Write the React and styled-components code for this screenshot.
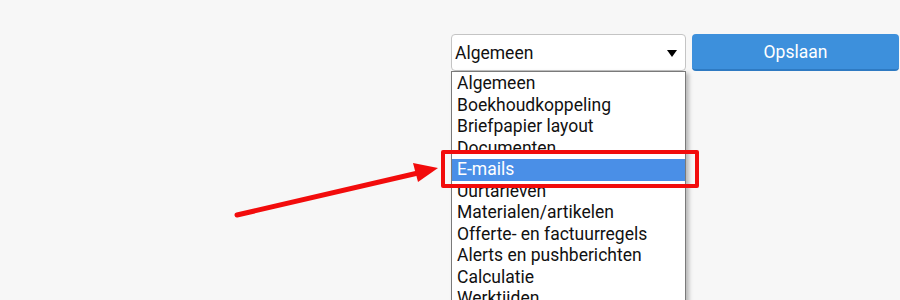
import React from 'react';
import styled, { createGlobalStyle } from 'styled-components';

const GlobalStyle = createGlobalStyle`
  html, body {
    margin: 0;
    padding: 0;
    background: #f7f7f7;
    font-family: Roboto, "Liberation Sans", Arial, sans-serif;
    overflow: hidden;
  }
`;

const Page = styled.div`
  position: relative;
  width: 900px;
  height: 300px;
  overflow: hidden;
`;

const Toolbar = styled.div`
  display: flex;
  justify-content: flex-end;
  align-items: flex-start;
  gap: 6px;
  padding: 34px 1px 0 0;
`;

const SelectWrap = styled.div`
  position: relative;
  width: 235px;
`;

const SelectBox = styled.div`
  box-sizing: border-box;
  height: 37px;
  display: flex;
  align-items: center;
  justify-content: space-between;
  padding: 1px 4px 0 3px;
  background: #fff;
  border: 1px solid #c4c4c4;
  border-radius: 4px;
  font-size: 17.5px;
  color: #111;
`;

const Caret = styled.span`
  width: 0;
  height: 0;
  margin-right: 4px;
  border-left: 5px solid transparent;
  border-right: 5px solid transparent;
  border-top: 7px solid #000;
`;

const List = styled.ul`
  position: absolute;
  top: 37px;
  left: 0;
  width: 235px;
  box-sizing: border-box;
  margin: 0;
  padding: 1px 0;
  list-style: none;
  background: #fff;
  border: 1px solid #7a7a7a;
  box-shadow: 3px 2px 4px rgba(0, 0, 0, 0.25);
  z-index: 2;
`;

const Option = styled.li`
  height: 21.5px;
  line-height: 21.5px;
  padding-left: 5px;
  font-size: 17.5px;
  white-space: nowrap;
  color: ${(p) => (p.active ? '#fff' : '#111')};
  background: ${(p) => (p.active ? '#4a8fe7' : 'transparent')};
`;

const SaveButton = styled.button`
  width: 207px;
  height: 37px;
  border: none;
  border-bottom: 2px solid #2e7ac2;
  border-radius: 4px;
  background: #3d90dc;
  color: #fff;
  font-family: inherit;
  font-size: 17.5px;
  padding: 0;
  cursor: pointer;
`;

const Highlight = styled.div`
  position: absolute;
  left: 441px;
  top: 150px;
  width: 258px;
  height: 38px;
  box-sizing: border-box;
  border: 4px solid #f20c0c;
  border-radius: 2px;
  z-index: 3;
`;

const Arrow = styled.svg`
  position: absolute;
  left: 0;
  top: 0;
  z-index: 3;
  pointer-events: none;
`;

const options = [
  'Algemeen',
  'Boekhoudkoppeling',
  'Briefpapier layout',
  'Documenten',
  'E-mails',
  'Uurtarieven',
  'Materialen/artikelen',
  'Offerte- en factuurregels',
  'Alerts en pushberichten',
  'Calculatie',
  'Werktijden',
  'Gebruikers',
];

export default function App() {
  return (
    <Page>
      <GlobalStyle />
      <Toolbar>
        <SelectWrap>
          <SelectBox>
            Algemeen
            <Caret />
          </SelectBox>
          <List>
            {options.map((o) => (
              <Option key={o} active={o === 'E-mails'}>
                {o}
              </Option>
            ))}
          </List>
        </SelectWrap>
        <SaveButton>Opslaan</SaveButton>
      </Toolbar>
      <Highlight />
      <Arrow width="900" height="300" viewBox="0 0 900 300">
        <line x1="237" y1="215" x2="418" y2="173" stroke="#f20c0c" strokeWidth="5" strokeLinecap="round" />
        <polygon points="438,168 413,163 418,182" fill="#f20c0c" />
      </Arrow>
    </Page>
  );
}
